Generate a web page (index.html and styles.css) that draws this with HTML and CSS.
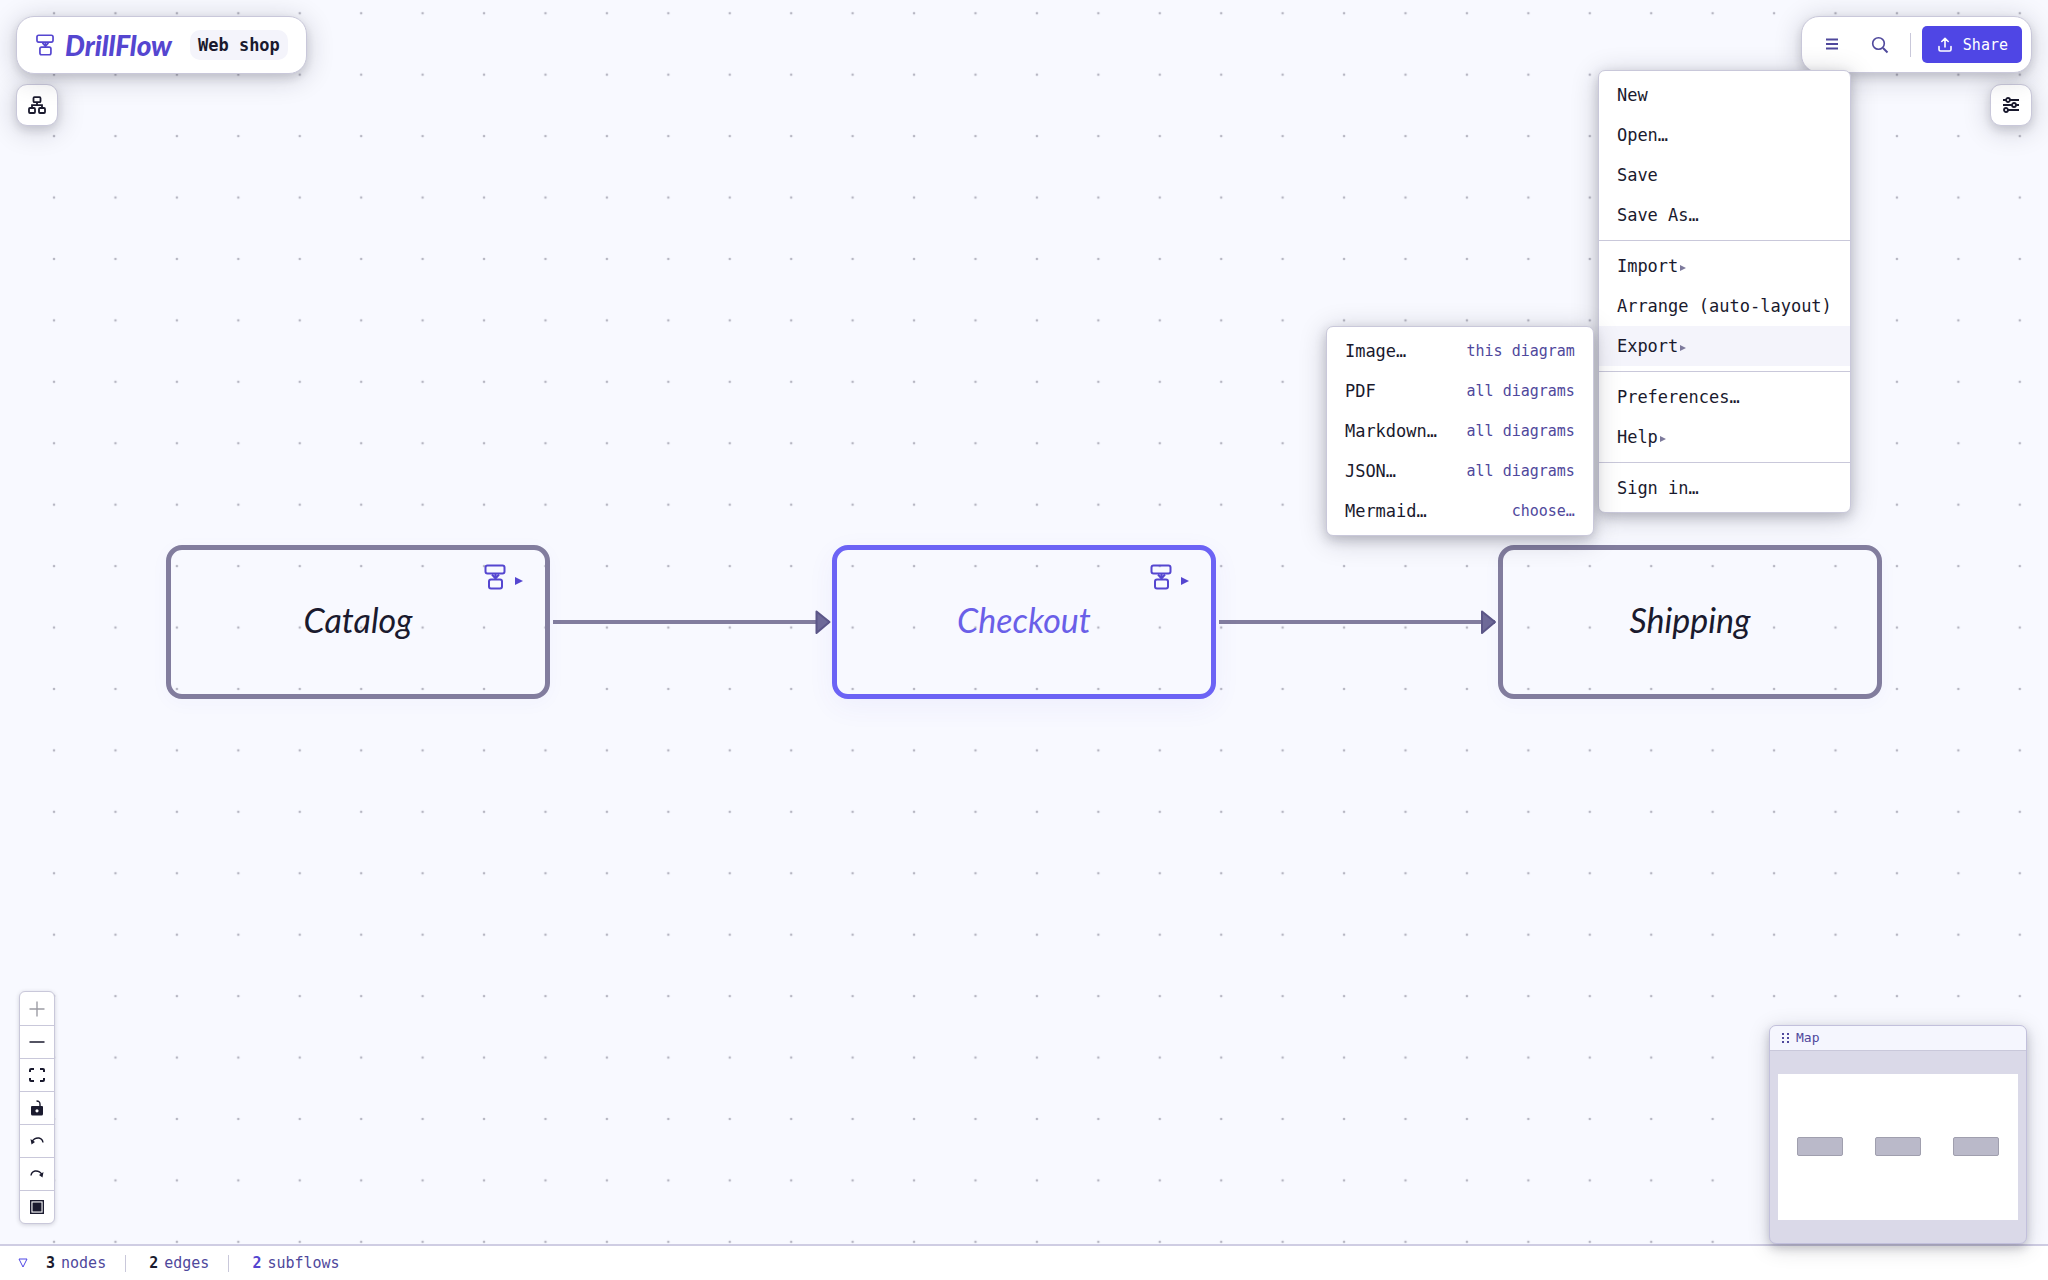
FILE: index.html
```html
<!DOCTYPE html>
<html lang="en">
<head>
<meta charset="utf-8">
<meta name="viewport" content="width=device-width, initial-scale=1">
<title>DrillFlow – Web shop</title>
<link rel="stylesheet" href="styles.css">
</head>
<body>
<svg class="sprite" aria-hidden="true">
  <symbol id="i-flow" viewBox="0 0 22 26">
    <rect x="1.5" y="1.5" width="19" height="8" rx="2"/>
    <rect x="5" y="15.5" width="13" height="9" rx="2"/>
    <path d="M11.5 9.5v4M8 10.5l3.5 4 3.5-4"/>
  </symbol>
</svg>

<main class="canvas">
  <svg class="canvas-art" aria-hidden="true">
    <defs>
      <pattern id="dots" x="-7.4" y="-48.2" width="61.43" height="61.43" patternUnits="userSpaceOnUse">
        <circle cx="61.43" cy="61.43" r="1.3" fill="#b6b6c2"/>
        <circle cx="0" cy="0" r="1.3" fill="#b6b6c2"/>
        <circle cx="61.43" cy="0" r="1.3" fill="#b6b6c2"/>
        <circle cx="0" cy="61.43" r="1.3" fill="#b6b6c2"/>
      </pattern>
    </defs>
    <rect width="100%" height="100%" fill="url(#dots)"/>
    <g class="edge">
      <path d="M553 622H829"/>
      <path class="edge-head" d="M816.500 611.500L829.500 622L816.500 633Z"/>
    </g>
    <g class="edge">
      <path d="M1219 622H1495"/>
      <path class="edge-head" d="M1482 611.500L1495 622L1482 633Z"/>
    </g>
  </svg>

  <div class="node node-catalog">
    <span class="node-label">Catalog</span>
    <button class="drill" aria-label="Open Catalog subflow"><svg><use href="#i-flow"/></svg><i class="drill-arrow"></i></button>
  </div>
  <div class="node node-checkout is-selected">
    <span class="node-label">Checkout</span>
    <button class="drill" aria-label="Open Checkout subflow"><svg><use href="#i-flow"/></svg><i class="drill-arrow"></i></button>
  </div>
  <div class="node node-shipping">
    <span class="node-label">Shipping</span>
  </div>

  <header class="chrome">
    <div class="panel brand-panel">
      <a class="brand" href="#"><svg class="brand-icon"><use href="#i-flow"/></svg><span>DrillFlow</span></a>
      <button class="title-chip">Web shop</button>
    </div>

    <div class="panel tools-panel">
      <div class="menu-anchor">
        <button class="icon-button" aria-label="Menu" aria-expanded="true">
          <svg width="14" height="14" viewBox="0 0 14 14"><path d="M1 1.500h12M1 6h12M1 10.500h12" stroke-width="1.800"/></svg>
        </button>
        <ul class="menu main-menu">
          <li><button>New</button></li>
          <li><button>Open…</button></li>
          <li><button>Save</button></li>
          <li><button>Save As…</button></li>
          <li class="menu-rule"></li>
          <li><button>Import<i class="more"></i></button></li>
          <li><button>Arrange (auto-layout)</button></li>
          <li class="has-submenu">
            <button class="is-open">Export<i class="more"></i></button>
            <ul class="menu submenu">
              <li><button>Image…<span class="hint">this diagram</span></button></li>
              <li><button>PDF<span class="hint">all diagrams</span></button></li>
              <li><button>Markdown…<span class="hint">all diagrams</span></button></li>
              <li><button>JSON…<span class="hint">all diagrams</span></button></li>
              <li><button>Mermaid…<span class="hint">choose…</span></button></li>
            </ul>
          </li>
          <li class="menu-rule"></li>
          <li><button>Preferences…</button></li>
          <li><button>Help<i class="more"></i></button></li>
          <li class="menu-rule"></li>
          <li><button>Sign in…</button></li>
        </ul>
      </div>
      <button class="icon-button" aria-label="Search">
        <svg width="18" height="18" viewBox="0 0 18 18"><circle cx="7.500" cy="7.500" r="5.800" stroke-width="1.600"/><path d="M12 12l4.500 4.500" stroke-width="2"/></svg>
      </button>
      <span class="tools-rule"></span>
      <button class="share">
        <svg width="14" height="16" viewBox="0 0 14 16"><path d="M7 10V1.500M3.800 4.500L7 1.300l3.200 3.200M1 9.500v3q0 1.500 1.500 1.500h9q1.500 0 1.500-1.500v-3"/></svg>
        <span>Share</span>
      </button>
    </div>

    <button class="panel side-button" aria-label="Outline">
      <svg width="18" height="18" viewBox="0 0 18 18"><rect x="5.500" y="1.200" width="7" height="5" rx="1"/><rect x="1" y="12" width="6" height="5" rx="1"/><rect x="11" y="12" width="6" height="5" rx="1"/><path d="M9 6.200v3M4 12V9.200h10V12"/></svg>
    </button>
    <button class="panel side-button settings-button" aria-label="Style settings">
      <svg width="18" height="16" viewBox="0 0 18 16"><path d="M1 3h3M8 3h9M1 8h9M14 8h3M6 13h11"/><circle cx="6" cy="3" r="2"/><circle cx="12" cy="8" r="2"/><circle cx="4" cy="13" r="2"/></svg>
    </button>
  </header>

  <div class="controls">
    <button aria-label="Zoom in" disabled><svg viewBox="0 0 16 16"><path d="M8 .5v15M.5 8h15"/></svg></button>
    <button aria-label="Zoom out"><svg viewBox="0 0 16 16"><path d="M.5 8h15"/></svg></button>
    <button aria-label="Fit view"><svg viewBox="0 0 16 16"><path stroke-width="2" d="M1 5V3q0-1 1-1h3M11 2h3q1 0 1 1v2M15 11v2q0 1-1 1h-3M5 14H2q-1 0-1-1v-2"/></svg></button>
    <button aria-label="Toggle lock"><svg viewBox="0 0 16 16"><path stroke-width="1.400" d="M7.500 1q3.700 0 3.500 3.500V7"/><path class="solid" fill-rule="evenodd" d="M3 6h10q1 0 1 1v7q0 1.500-1.500 1.500h-9Q2 15.500 2 14V7q0-1 1-1zm5 3.200a1.600 1.600 0 100 3.200 1.600 1.600 0 000-3.200z"/></svg></button>
    <button aria-label="Undo"><svg viewBox="0 0 16 16"><path d="M3 8.500Q5.500 4.500 10 5q3.500.800 4 4.500"/><path class="solid" d="M1.500 6l1 5.500 3.500-2.500z"/></svg></button>
    <button aria-label="Redo"><svg viewBox="0 0 16 16"><path d="M13 8.500Q10.500 4.500 6 5q-3.500.800-4 4.500"/><path class="solid" d="M14.500 6l-1 5.500L10 9z"/></svg></button>
    <button aria-label="Toggle map"><svg viewBox="0 0 16 16"><rect x="1.700" y="1.700" width="12.600" height="12.600"/><rect class="solid" x="3.500" y="3.500" width="9" height="9"/></svg></button>
  </div>

  <section class="map">
    <h2 class="map-title"><svg width="8" height="10" viewBox="0 0 8 10"><path d="M0 0h2v2H0zM5 0h2v2H5zM0 4h2v2H0zM5 4h2v2H5zM0 8h2v2H0zM5 8h2v2H5z"/></svg>Map</h2>
    <div class="map-body">
      <svg class="map-view" viewBox="0 0 240 146"><g><rect x="19.500" y="63.500" width="45" height="18" rx="1.500"/><rect x="97.500" y="63.500" width="45" height="18" rx="1.500"/><rect x="175.500" y="63.500" width="45" height="18" rx="1.500"/></g></svg>
    </div>
  </section>
</main>

<footer class="status">
  <svg width="10" height="10" viewBox="0 0 10 10"><path d="M1 1h8L5 9z"/></svg>
  <span class="stat"><b>3</b>nodes</span>
  <span class="stat"><b>2</b>edges</span>
  <span class="stat stat-accent"><b>2</b>subflows</span>
</footer>
</body>
</html>
```
FILE: styles.css
```css
:root {
  --accent: #4f46e5;
  --accent-deep: #5546d0;
  --ink: #1a1a2e;
  --muted: #4f489c;
  --line: #c9c8da;
  --panel-shadow: 0 4px 28px rgba(26, 26, 46, .2), 0 4px 10px rgba(26, 26, 46, .14);
  --mono: "DejaVu Sans Mono", "Liberation Mono", monospace;
  --hand: Lato, "Open Sans", sans-serif;
}

* { box-sizing: border-box; }

body {
  margin: 0;
  min-height: 100vh;
  display: flex;
  flex-direction: column;
  font-family: var(--mono);
  font-size: 17px;
  color: var(--ink);
  background: #fff;
}

button {
  font: inherit;
  color: inherit;
  border: 0;
  padding: 0;
  background: none;
  cursor: pointer;
}

svg { fill: none; stroke: currentColor; flex: none; }
.sprite { position: absolute; width: 0; height: 0; }

/* Canvas */
.canvas {
  position: relative;
  flex: 1;
  background: #f8f9ff;
}

.canvas-art {
  position: absolute;
  width: 100%;
  height: 100%;
  stroke: none;
}

.edge path { stroke: #827d9e; stroke-width: 4; }
.edge .edge-head { fill: #6e6a98; stroke: #5c5788; stroke-width: 2; stroke-linejoin: round; }

.node {
  position: absolute;
  top: 545px;
  width: 384px;
  height: 154px;
  display: grid;
  place-items: center;
  padding-bottom: 4px;
  border: 5px solid #827d9e;
  border-radius: 16px;
  box-shadow: 0 4px 20px rgba(79, 70, 229, .03);
}
.node-catalog { left: 166px; }
.node-checkout { left: 832px; }
.node-shipping { left: 1498px; }
.node.is-selected { border-color: #6c63f5; box-shadow: 0 8px 28px rgba(79, 70, 229, .06); }
.node-label { font: italic 34px/44px var(--hand); }
.is-selected .node-label { color: #6a5fe8; }

.drill {
  position: absolute;
  top: 14px;
  right: 22px;
  display: flex;
  align-items: center;
  gap: 9px;
  color: var(--accent-deep);
}
.drill svg { width: 22px; height: 26px; stroke-width: 2; }
.drill-arrow {
  margin-top: 8px;
  border-left: 8px solid;
  border-top: 4px solid transparent;
  border-bottom: 4px solid transparent;
}

/* Floating chrome */
.chrome {
  position: absolute;
  inset: 16px 16px auto;
  z-index: 2;
  display: grid;
  grid-template-columns: auto auto;
  justify-content: space-between;
  align-items: start;
  row-gap: 10px;
}

.panel {
  border: 1px solid var(--line);
  border-radius: 18px;
  background: #fff;
  box-shadow: var(--panel-shadow);
}

.brand-panel {
  position: relative;
  z-index: 1;
  display: flex;
  align-items: center;
  gap: 18px;
  padding: 13px 18px;
}
.brand {
  display: flex;
  align-items: center;
  gap: 10px;
  color: var(--accent-deep);
  font: italic 900 28px/30px var(--hand);
  text-decoration: none;
}
.brand-icon { width: 20px; height: 22px; stroke-width: 2; }
.title-chip {
  padding: 0 8px;
  border-radius: 10px;
  background: #f4f4fb;
  font-weight: 700;
  line-height: 30px;
}

.tools-panel {
  position: relative;
  z-index: 1;
  display: flex;
  align-items: center;
  gap: 11px;
  padding: 9px 9px 9px 12px;
}
.icon-button {
  display: grid;
  place-items: center;
  width: 37px;
  height: 35px;
  color: var(--muted);
}
.tools-rule { width: 1px; height: 24px; background: var(--line); }
.share {
  display: flex;
  align-items: center;
  gap: 11px;
  height: 37px;
  padding: 0 14px 0 16px;
  border-radius: 5px;
  background: var(--accent);
  color: #fff;
  font-size: 15px;
}
.share svg { stroke-width: 1.6; stroke-linejoin: round; stroke-linecap: round; }

.side-button {
  display: grid;
  place-items: center;
  width: 42px;
  height: 42px;
  border-radius: 11px;
}
.side-button svg { stroke-width: 1.8; }
.settings-button { justify-self: end; }

/* Menus */
.menu-anchor, .has-submenu { position: relative; }
.menu {
  position: absolute;
  margin: 0;
  padding: 4px 0;
  list-style: none;
  white-space: nowrap;
  border: 1px solid var(--line);
  border-radius: 7px;
  background: #fff;
  box-shadow: 0 4px 28px rgba(26, 26, 46, .2), 0 4px 12px rgba(26, 26, 46, .2);
}
.main-menu { top: calc(100% + 8px); right: 0; }
.submenu { top: 0; right: calc(100% + 5px); width: 268px; }
.menu button {
  display: flex;
  align-items: center;
  width: 100%;
  height: 40px;
  padding: 0 18px;
}
.menu .is-open { background: #f4f4fb; }
.menu-rule { height: 1px; margin: 5px 0; background: var(--line); }
.more {
  margin: 3px 0 0 2px;
  border-left: 6px solid #7d7a9c;
  border-top: 3px solid transparent;
  border-bottom: 3px solid transparent;
}
.hint { margin-left: auto; color: var(--muted); font-size: 15px; }

/* Viewport controls */
.controls {
  position: absolute;
  left: 19px;
  bottom: 20px;
  width: 36px;
  display: flex;
  flex-direction: column;
  overflow: hidden;
  border: 1px solid var(--line);
  border-radius: 6px;
  background: #fff;
  box-shadow: 0 1px 4px rgba(26, 26, 46, .18);
}
.controls button {
  display: grid;
  place-items: center;
  height: 33px;
}
.controls button + button { border-top: 1px solid var(--line); }
.controls svg { width: 16px; height: 16px; stroke-width: 1.4; }
.controls button:disabled { color: #9c9ca4; }
.controls .solid { fill: currentColor; stroke: none; }

/* Map */
.map {
  position: absolute;
  right: 21px;
  bottom: 0;
  z-index: 1;
  width: 258px;
  border: 1px solid #c2c0dc;
  border-radius: 7px;
  overflow: hidden;
  background: #dad9e8;
  box-shadow: 0 4px 22px rgba(26, 26, 46, .16), 0 4px 10px rgba(26, 26, 46, .2);
}
.map-title {
  display: flex;
  align-items: center;
  gap: 6px;
  margin: 0;
  padding: 0 12px;
  border-bottom: 1px solid var(--line);
  background: #f5f6fe;
  color: var(--muted);
  font-size: 13px;
  font-weight: 400;
  line-height: 24px;
}
.map-title svg { fill: currentColor; stroke: none; }
.map-body { padding: 23px 8px; }
.map-view { display: block; width: 100%; background: #fff; fill: #bab9c9; stroke: #a09fae; }

/* Status bar */
.status {
  display: flex;
  align-items: center;
  height: 36px;
  padding: 0 18px;
  border-top: 2px solid #cfcde3;
  color: var(--muted);
  font-size: 15px;
}
.status svg { margin-right: 18px; color: var(--accent); }
.stat { display: flex; gap: 6px; line-height: 17px; }
.stat b { color: var(--ink); }
.stat-accent b { color: var(--accent-deep); }
.stat + .stat { margin-left: 19px; padding-left: 23px; border-left: 1px solid var(--line); }
```
